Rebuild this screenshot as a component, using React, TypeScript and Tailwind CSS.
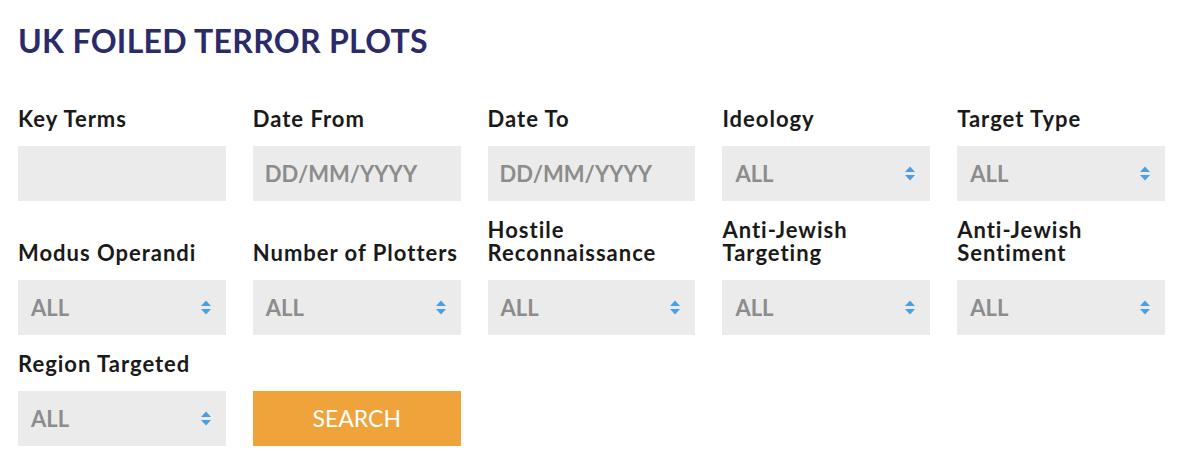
import React from "react";

type Field = {
  label: string[];
  kind: "text" | "date" | "select";
};

const fields: Field[] = [
  { label: ["Key Terms"], kind: "text" },
  { label: ["Date From"], kind: "date" },
  { label: ["Date To"], kind: "date" },
  { label: ["Ideology"], kind: "select" },
  { label: ["Target Type"], kind: "select" },
  { label: ["Modus Operandi"], kind: "select" },
  { label: ["Number of Plotters"], kind: "select" },
  { label: ["Hostile", "Reconnaissance"], kind: "select" },
  { label: ["Anti-Jewish", "Targeting"], kind: "select" },
  { label: ["Anti-Jewish", "Sentiment"], kind: "select" },
  { label: ["Region Targeted"], kind: "select" },
];

function SortArrows() {
  return (
    <svg width="10" height="15" viewBox="0 0 10 15" className="shrink-0">
      <path d="M5 0.5 L10 6 H0 Z" fill="#4a9fe0" />
      <path d="M5 14.5 L10 9 H0 Z" fill="#4a9fe0" />
    </svg>
  );
}

function FieldBox({ kind }: { kind: Field["kind"] }) {
  if (kind === "text") {
    return <div className="h-[55px] bg-[#ebebeb]" />;
  }
  if (kind === "date") {
    return (
      <div className="flex h-[55px] items-center bg-[#ebebeb] px-3 text-[22px] font-bold text-[#8c8c8c]">
        DD/MM/YYYY
      </div>
    );
  }
  return (
    <div className="flex h-[55px] items-center justify-between bg-[#ebebeb] pl-[13px] pr-[15px] text-[22px] font-bold text-[#8c8c8c]">
      <span>ALL</span>
      <SortArrows />
    </div>
  );
}

export default function App() {
  return (
    <div
      className="min-h-[472px] bg-white px-[18px] pt-[21px] text-[#1a1a1a]"
      style={{ fontFamily: "Lato, 'Noto Sans', sans-serif" }}
    >
      <h1 className="text-[32px] font-bold leading-[40px] tracking-[0.01em] text-[#2b2a6b]">
        UK FOILED TERROR PLOTS
      </h1>
      <div className="mt-[46px] grid w-[1147px] grid-cols-5 items-end gap-x-[27px] gap-y-[17px]">
        {fields.map((f) => (
          <div key={f.label.join(" ")} className="flex flex-col">
            <div className="mb-4 whitespace-nowrap text-[22px] font-bold leading-[23px] tracking-[0.045em]">
              {f.label.map((l) => (
                <div key={l}>{l}</div>
              ))}
            </div>
            <FieldBox kind={f.kind} />
          </div>
        ))}
        <button className="h-[55px] bg-[#f0a33a] text-[23px] text-white">SEARCH</button>
      </div>
    </div>
  );
}
